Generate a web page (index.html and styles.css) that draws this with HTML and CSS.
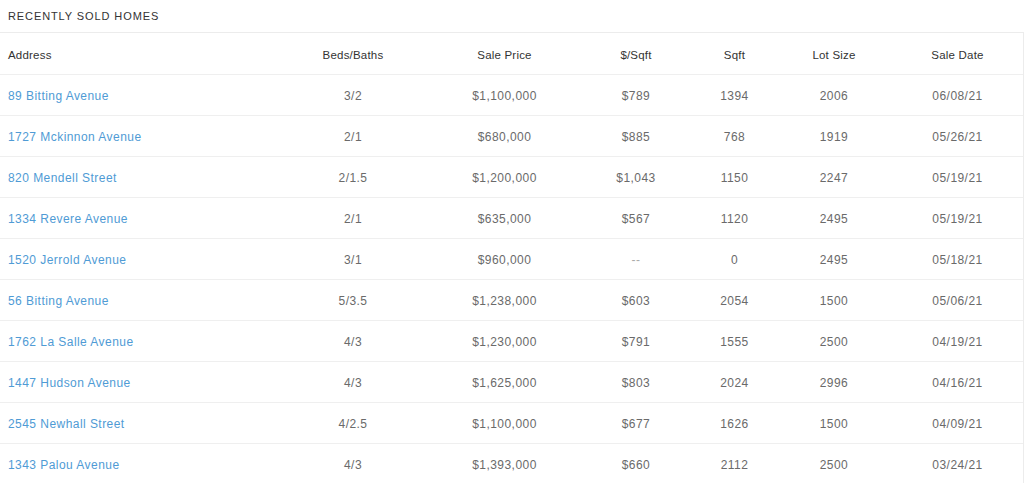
FILE: index.html
```html
<!DOCTYPE html>
<html>
<head>
<meta charset="utf-8">
<link rel="stylesheet" href="styles.css">
</head>
<body>
<div class="panel">
  <div class="title">Recently Sold Homes</div>
  <div class="table">
    <div class="row head">
      <div class="c addr">Address</div><div class="c">Beds/Baths</div><div class="c">Sale Price</div><div class="c">$/Sqft</div><div class="c">Sqft</div><div class="c">Lot Size</div><div class="c last">Sale Date</div>
    </div>
    <div class="row"><div class="c addr"><a href="#">89 Bitting Avenue</a></div><div class="c">3/2</div><div class="c">$1,100,000</div><div class="c">$789</div><div class="c">1394</div><div class="c">2006</div><div class="c last">06/08/21</div></div>
    <div class="row"><div class="c addr"><a href="#">1727 Mckinnon Avenue</a></div><div class="c">2/1</div><div class="c">$680,000</div><div class="c">$885</div><div class="c">768</div><div class="c">1919</div><div class="c last">05/26/21</div></div>
    <div class="row"><div class="c addr"><a href="#">820 Mendell Street</a></div><div class="c">2/1.5</div><div class="c">$1,200,000</div><div class="c">$1,043</div><div class="c">1150</div><div class="c">2247</div><div class="c last">05/19/21</div></div>
    <div class="row"><div class="c addr"><a href="#">1334 Revere Avenue</a></div><div class="c">2/1</div><div class="c">$635,000</div><div class="c">$567</div><div class="c">1120</div><div class="c">2495</div><div class="c last">05/19/21</div></div>
    <div class="row"><div class="c addr"><a href="#">1520 Jerrold Avenue</a></div><div class="c">3/1</div><div class="c">$960,000</div><div class="c dash">--</div><div class="c">0</div><div class="c">2495</div><div class="c last">05/18/21</div></div>
    <div class="row"><div class="c addr"><a href="#">56 Bitting Avenue</a></div><div class="c">5/3.5</div><div class="c">$1,238,000</div><div class="c">$603</div><div class="c">2054</div><div class="c">1500</div><div class="c last">05/06/21</div></div>
    <div class="row"><div class="c addr"><a href="#">1762 La Salle Avenue</a></div><div class="c">4/3</div><div class="c">$1,230,000</div><div class="c">$791</div><div class="c">1555</div><div class="c">2500</div><div class="c last">04/19/21</div></div>
    <div class="row"><div class="c addr"><a href="#">1447 Hudson Avenue</a></div><div class="c">4/3</div><div class="c">$1,625,000</div><div class="c">$803</div><div class="c">2024</div><div class="c">2996</div><div class="c last">04/16/21</div></div>
    <div class="row"><div class="c addr"><a href="#">2545 Newhall Street</a></div><div class="c">4/2.5</div><div class="c">$1,100,000</div><div class="c">$677</div><div class="c">1626</div><div class="c">1500</div><div class="c last">04/09/21</div></div>
    <div class="row"><div class="c addr"><a href="#">1343 Palou Avenue</a></div><div class="c">4/3</div><div class="c">$1,393,000</div><div class="c">$660</div><div class="c">2112</div><div class="c">2500</div><div class="c last">03/24/21</div></div>
  </div>
</div>
</body>
</html>
```

FILE: styles.css
```css
html, body {
  margin: 0;
  padding: 0;
  background: #ffffff;
}
body {
  font-family: "Liberation Sans", Arial, Helvetica, sans-serif;
  width: 1024px;
  overflow: hidden;
}
.panel {
  width: 1024px;
}
.title {
  height: 33px;
  box-sizing: border-box;
  padding-left: 8px;
  display: flex;
  align-items: center;
  font-size: 11px;
  letter-spacing: 0.9px;
  text-transform: uppercase;
  color: #333;
  border-bottom: 1px solid #ececec;
}
.table {
  border-right: 1px solid #ececec;
}
.row {
  display: grid;
  grid-template-columns: 282px 142px 161px 102px 95px 104px 1fr;
  height: 40px;
  border-bottom: 1px solid #efefef;
  align-items: center;
}
.row.head {
  height: 41px;
}
.c {
  text-align: center;
  font-size: 12px;
  letter-spacing: 0.45px;
  color: #6a6a6a;
  padding-top: 2px;
}
.c.addr {
  text-align: left;
  padding-left: 8px;
}
.c.last {
  padding-left: 6px;
}
.head .c {
  color: #333;
  font-size: 11.5px;
  letter-spacing: 0.2px;
}
.c a {
  color: #4f9bd5;
  text-decoration: none;
}
.c.dash {
  color: #aaa;
}
```
